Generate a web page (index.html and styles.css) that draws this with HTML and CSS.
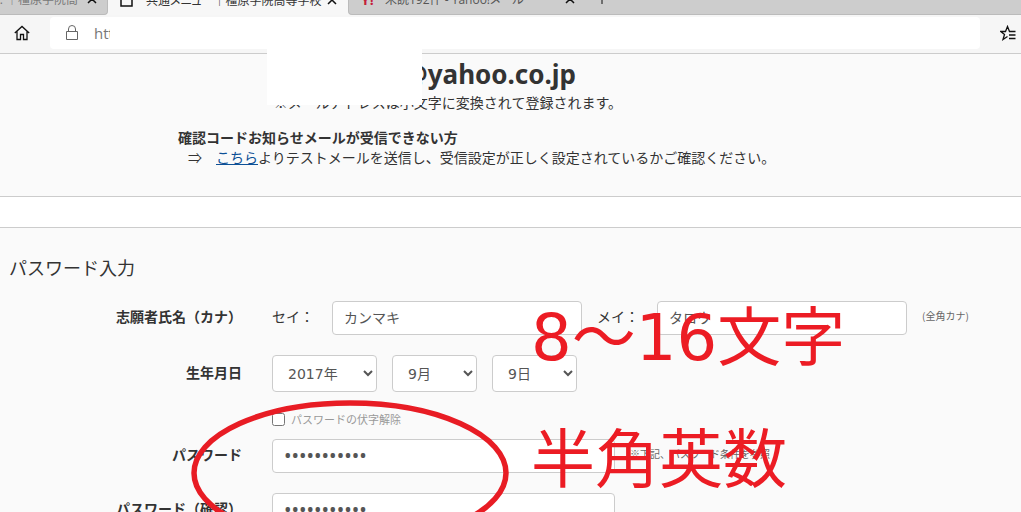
FILE: index.html
```html
<!DOCTYPE html>
<html lang="ja">
<head>
    <meta charset="UTF-8">
    <meta name="viewport" content="width=device-width, initial-scale=1.0">
    <title>パスワード入力</title>
    <link rel="stylesheet" href="styles.css">
</head>
<body>
    <div class="tabs">
        <div class="tab tab-first">
            <span class="tab-title">. ｜橿原学院高</span>
            <svg class="tab-close" viewBox="0 0 10 10"><path d="M1 1l8 8M9 1l-8 8"/></svg>
        </div>
        <div class="tab tab-active">
            <svg class="tab-page" viewBox="0 0 13 14"><path d="M1 1h11v12h-11z"/></svg>
            <span class="tab-title">共通メニュー｜橿原学院高等学校</span>
            <svg class="tab-close" viewBox="0 0 10 10"><path d="M1 1l8 8M9 1l-8 8"/></svg>
        </div>
        <div class="tab tab-last">
            <span class="tab-mark">Y!</span>
            <span class="tab-title">未読192件 - Yahoo!メール</span>
            <svg class="tab-close" viewBox="0 0 10 10"><path d="M1 1l8 8M9 1l-8 8"/></svg>
            <svg class="tab-new" viewBox="0 0 12 12"><path d="M6 0v12M0 6h12"/></svg>
        </div>
    </div>

    <div class="toolbar">
        <svg class="icon" viewBox="0 0 16 16"><path d="M.8 8L8 1.500 15.200 8M3 6.500V14.500h3.500V9.500h3v5H13V6.500"/></svg>
        <div class="address">
            <svg class="icon icon-lock" viewBox="0 0 16 16"><path d="M2.500 6.500h11v8h-11zM4.500 6.500V4a3.500 3.500 0 0 1 7 0v2.500"/></svg>
            <span class="url">http</span>
        </div>
        <svg class="icon" viewBox="0 0 16 16"><path d="M15.500 6.500H9.500L7.500 1.500 5.500 6.500H.8L4.500 9.500 3 14.500l4.500-3M9 10h6.500M9 13.500h6.500"/></svg>
    </div>

    <div class="section mail-section">
        <div class="mail-body">
            <div class="mail-address">sample@yahoo.co.jp</div>
            <div class="mail-note">※メールアドレスは小文字に変換されて登録されます。</div>
            <div class="mail-mask"></div>
        </div>
        <div class="mail-help">
            <strong>確認コードお知らせメールが受信できない方</strong>
            <p>⇒　<a href="#">こちら</a>よりテストメールを送信し、受信設定が正しく設定されているかご確認ください。</p>
        </div>
    </div>

    <div class="section">
        <h2>パスワード入力</h2>
        <form>
            <div class="row">
                <div class="row-label">志願者氏名（カナ）</div>
                <div class="fields">
                    <label class="name-label" for="sei">セイ：</label>
                    <input type="text" class="name-input" id="sei" value="カンマキ">
                    <label class="name-label name-label-mei" for="mei">メイ：</label>
                    <input type="text" class="name-input" id="mei" value="タロウ">
                    <span class="hint">(全角カナ)</span>
                </div>
            </div>
            <div class="row">
                <div class="row-label">生年月日</div>
                <div class="fields birth">
                    <select class="year" aria-label="年"><option>2017年</option></select>
                    <select aria-label="月"><option>9月</option></select>
                    <select aria-label="日"><option>9日</option></select>
                </div>
            </div>
            <div class="row row-check">
                <div class="row-label"></div>
                <label class="check"><input type="checkbox">パスワードの伏字解除</label>
            </div>
            <div class="row">
                <label class="row-label" for="password">パスワード</label>
                <div class="fields">
                    <input type="password" id="password" value="abcdefg1234">
                    <span class="hint">※下記、パスワード条件を参照</span>
                </div>
            </div>
            <div class="row">
                <label class="row-label" for="confirm">パスワード（確認）</label>
                <div class="fields">
                    <input type="password" id="confirm" value="abcdefg1234">
                </div>
            </div>
        </form>

        <!-- hand-drawn notes over the form -->
        <svg class="circle" viewBox="0 0 320 148"><ellipse cx="160" cy="74" rx="156" ry="70"/></svg>
        <div class="note note-length">8～16文字</div>
        <div class="note note-chars">半角英数</div>
    </div>
</body>
</html>
```

FILE: styles.css
```css
* {
    box-sizing: border-box;
}

body {
    margin: 0;
    height: 100vh;
    overflow: hidden;
    background: white;
    color: #333;
    font-family: "Noto Sans CJK JP", sans-serif;
    font-size: 14px;
    line-height: 20px;
}

svg {
    fill: none;
    stroke: #111;
    flex-shrink: 0;
}

/* browser bar */
.tabs {
    display: flex;
    height: 15px;
    overflow: hidden;
    background: #f7f7f7;
}

.tab {
    display: flex;
    align-items: flex-end;
    padding-bottom: 6px;
    background: #cdcdcd;
    font-family: "Open Sans", "Noto Sans CJK JP", sans-serif;
    font-size: 12px;
    font-feature-settings: "palt";
    line-height: 16px;
    color: #555;
    white-space: nowrap;
}

.tab-first {
    width: 108px;
    justify-content: flex-end;
    padding-right: 10px;
    border-right: 1px solid #bbb;
    border-bottom: 1px solid #bbb;
    border-radius: 0 0 4px 0;
}

.tab-active {
    width: 240px;
    padding-left: 12px;
    padding-right: 11px;
    background: #f7f7f7;
    color: #333;
}

.tab-active .tab-close {
    margin-left: auto;
}

.tab-first .tab-title {
    margin-right: 9px;
    color: #777;
}

.tab-last {
    flex: 1;
    padding-left: 12px;
    border-left: 1px solid #bbb;
    border-bottom: 1px solid #bbb;
    border-radius: 0 0 0 4px;
}

.tab-last .tab-title {
    width: 128px;
}

.tab-page {
    width: 13px;
    height: 14px;
    margin-right: 13px;
    margin-bottom: 2px;
    stroke-width: 1.5;
}

.tab-mark {
    width: 24px;
    font-weight: bold;
    font-size: 14px;
    color: #c4203b;
}

.tab-close {
    width: 10px;
    height: 10px;
    margin-bottom: 4px;
    stroke-width: 1.5;
}

.tab-last .tab-close {
    margin-left: 52px;
}

.tab-new {
    width: 12px;
    height: 12px;
    margin-left: 21px;
    margin-bottom: 4px;
}

.toolbar {
    display: flex;
    align-items: center;
    gap: 20px;
    height: 39px;
    padding: 2px 5px 4px 14px;
    background: #f6f6f6;
    border-bottom: 1px solid #ccc;
}

.icon {
    width: 16px;
    height: 16px;
    stroke-width: 1.3;
}

.icon-lock {
    stroke: #666;
    stroke-width: 1;
}

.address {
    flex: 1;
    display: flex;
    align-items: center;
    gap: 14px;
    height: 32px;
    padding-left: 14px;
    background: white;
    border-radius: 4px;
}

.url {
    width: 16px;
    overflow: hidden;
    font-family: "Open Sans", sans-serif;
    font-size: 15px;
    color: #777;
}

/* page */
.section {
    position: relative;
    background: #fafafa;
    border-bottom: 1px solid #ccc;
}

.section + .section {
    margin-top: 30px;
    padding-top: 27px;
    border-top: 1px solid #ccc;
}

.mail-section {
    height: 143px;
    padding-left: 178px;
}

.mail-body {
    position: relative;
    width: 446px;
    height: 73px;
    padding-top: 4px;
    text-align: right;
}

.mail-address {
    padding-right: 48px;
    font-family: "Noto Sans", sans-serif;
    font-size: 26px;
    font-weight: bold;
    line-height: 32px;
    white-space: nowrap;
}

.mail-note {
    padding-top: 2px;
    padding-right: 2px;
    white-space: nowrap;
}

.mail-mask {
    position: absolute;
    top: -5px;
    left: 89px;
    width: 155px;
    height: 56px;
    background: white;
}

.mail-help strong {
    display: block;
}

.mail-help p {
    margin: 0;
    padding-left: 10px;
}

a {
    color: #0d5096;
    text-decoration: underline;
}

h2 {
    margin: 0 0 21px 9px;
    font-size: 18px;
    font-weight: normal;
    line-height: 25px;
}

.row {
    display: grid;
    grid-template-columns: 242px 1fr;
    column-gap: 30px;
    align-items: center;
    margin-bottom: 20px;
}

.row-check {
    margin-bottom: 10px;
}

.row-label,
.name-label {
    padding-bottom: 4px;
}

.row-label {
    font-weight: bold;
    text-align: right;
}

.fields {
    display: flex;
    align-items: center;
}

.birth {
    gap: 15px;
}

.name-label {
    width: 60px;
}

.name-label-mei {
    margin-left: 15px;
}

input[type="text"],
input[type="password"],
select {
    background: white;
    border: 1px solid #ccc;
    border-radius: 4px;
    color: #555;
    font-family: "DejaVu Sans", "Noto Sans CJK JP", sans-serif;
    font-size: 14px;
}

input[type="text"],
input[type="password"] {
    height: 34px;
    padding: 4px 11px 6px;
}

.name-input {
    width: 250px;
}

input[type="password"] {
    width: 343px;
    font-family: "Noto Sans", sans-serif;
    font-size: 20px;
}

select {
    width: 85px;
    height: 37px;
    padding: 6px 0 6px 11px;
}

.year {
    width: 105px;
}

.check {
    display: flex;
    align-items: center;
    gap: 6px;
    height: 17px;
    padding-bottom: 3px;
    font-size: 11px;
    color: #999;
}

.check input {
    width: 13px;
    height: 13px;
    margin: 0;
}

.hint {
    margin-left: 15px;
    padding-bottom: 4px;
    font-size: 10px;
    color: #666;
}

/* red notes */
.circle {
    position: absolute;
    top: 171px;
    left: 190px;
    width: 320px;
    height: 148px;
    stroke: #e81c24;
    stroke-width: 5.5;
}

.note {
    position: absolute;
    left: 531px;
    color: #ec1c24;
    font-family: "DejaVu Sans", "Noto Sans CJK JP", sans-serif;
    font-size: 64px;
    line-height: 80px;
    white-space: nowrap;
}

.note-length {
    top: 70px;
}

.note-chars {
    top: 192px;
}
```
